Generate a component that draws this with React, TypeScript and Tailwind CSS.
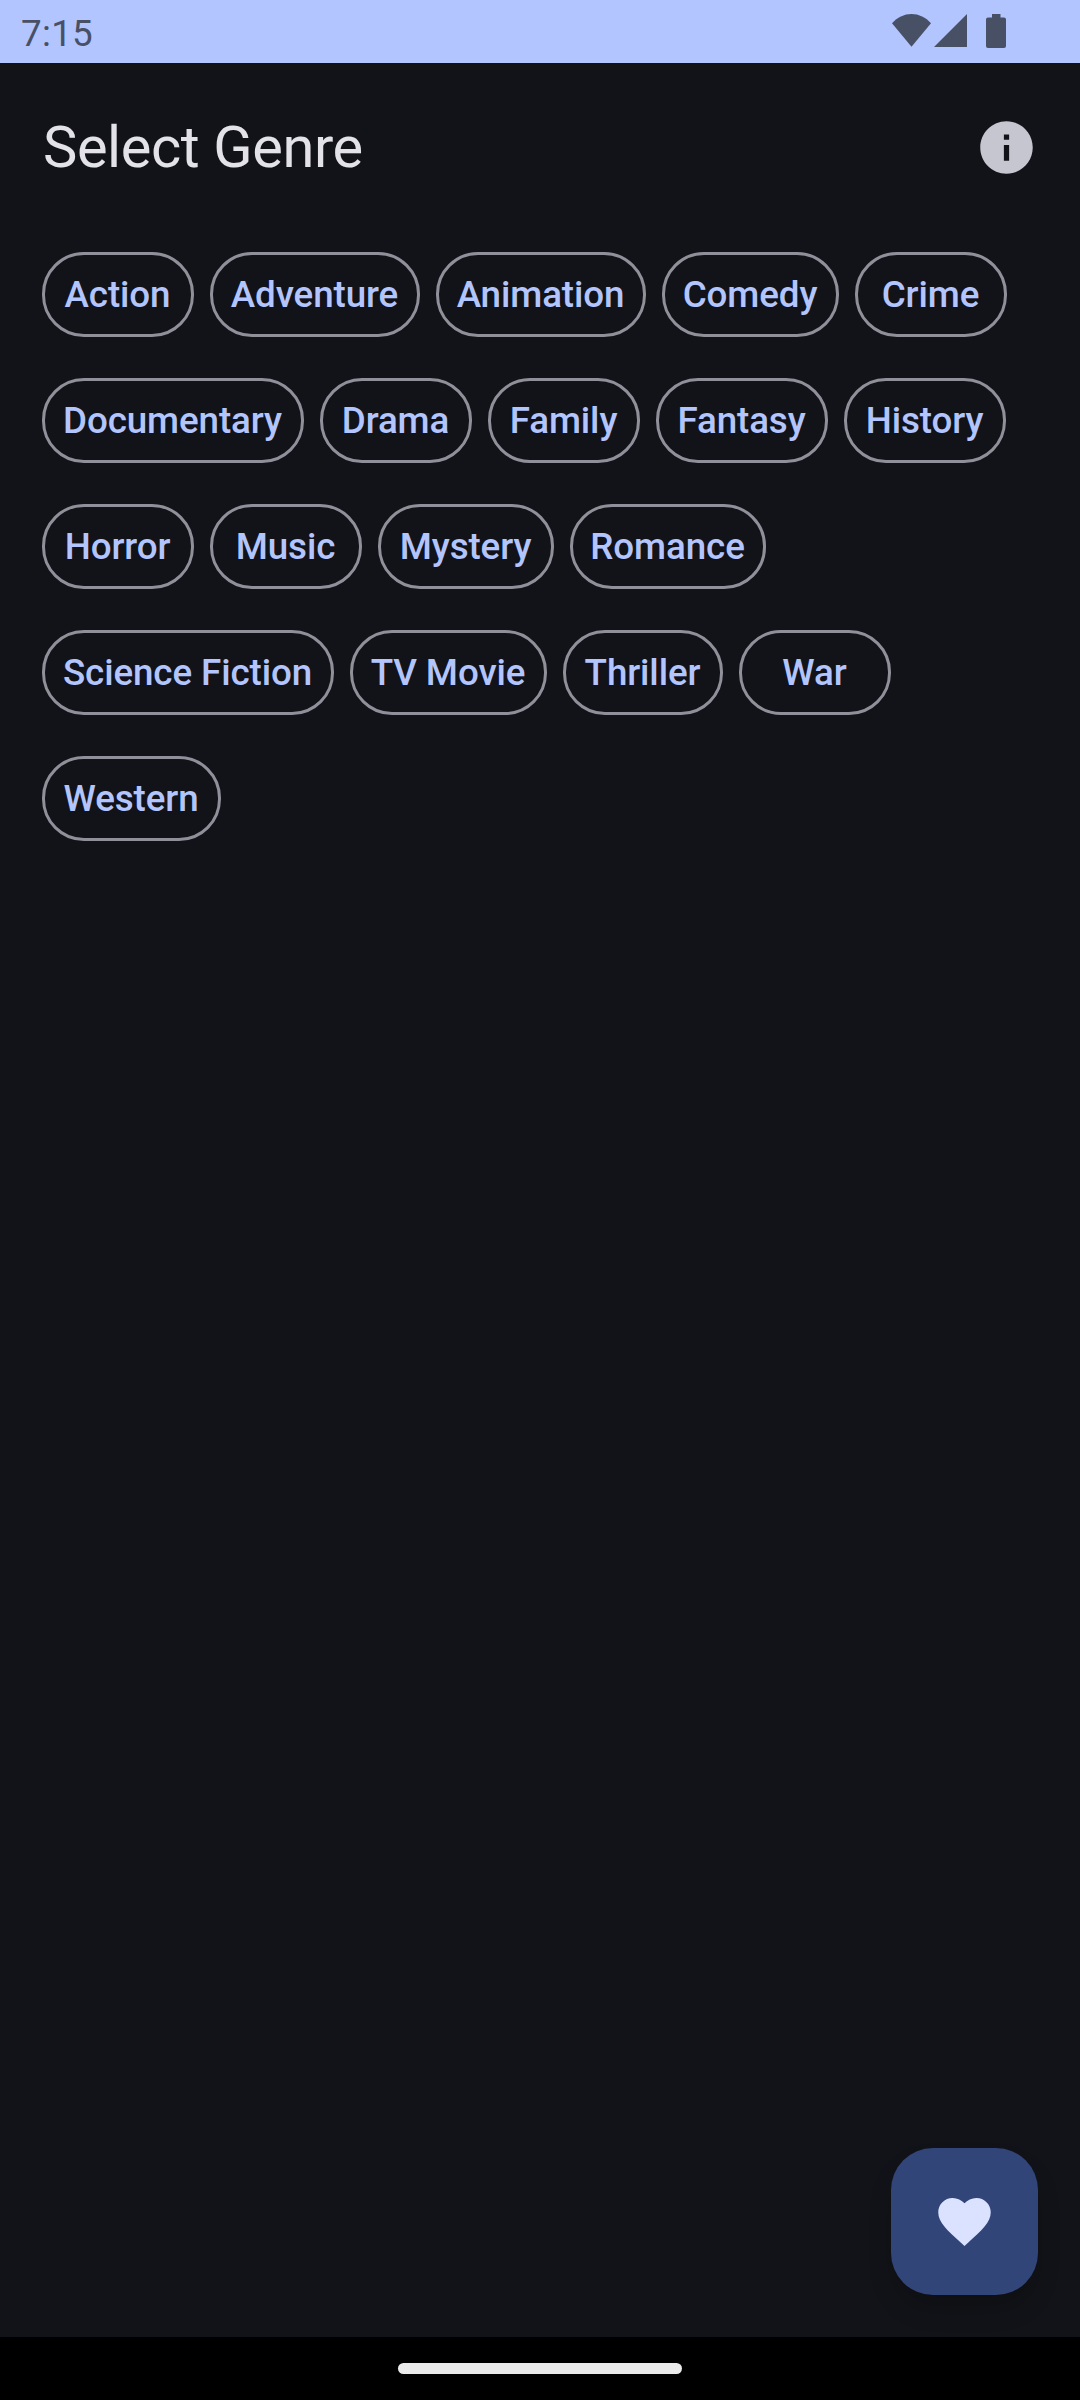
type Genre = { name: string; width: string };

const rows: Genre[][] = [
  [
    { name: "Action", width: "w-[152px]" },
    { name: "Adventure", width: "w-[210px]" },
    { name: "Animation", width: "w-[210px]" },
    { name: "Comedy", width: "w-[177px]" },
    { name: "Crime", width: "w-[152px]" },
  ],
  [
    { name: "Documentary", width: "w-[262px]" },
    { name: "Drama", width: "w-[152px]" },
    { name: "Family", width: "w-[152px]" },
    { name: "Fantasy", width: "w-[172px]" },
    { name: "History", width: "w-[162px]" },
  ],
  [
    { name: "Horror", width: "w-[152px]" },
    { name: "Music", width: "w-[152px]" },
    { name: "Mystery", width: "w-[176px]" },
    { name: "Romance", width: "w-[196px]" },
  ],
  [
    { name: "Science Fiction", width: "w-[292px]" },
    { name: "TV Movie", width: "w-[197px]" },
    { name: "Thriller", width: "w-[160px]" },
    { name: "War", width: "w-[152px]" },
  ],
  [{ name: "Western", width: "w-[179px]" }],
];

function StatusBar() {
  return (
    <div className="flex h-[63px] shrink-0 items-start justify-between bg-[#b2c5ff] pl-[21px] pr-[74px] text-[#485066]">
      <span className="pt-[12px] text-[36.75px] leading-[43px] tracking-[0.3px]">7:15</span>
      <div className="flex pt-[14px]">
        <svg className="h-[33px] w-[39px]" viewBox="0 0 39 33" fill="currentColor">
          <path d="M0 9.3C5.3 3.4 12 0 19.5 0S33.700 3.400 39 9.300L19.500 32.700z" />
        </svg>
        <svg className="ml-[3px] h-[33px] w-[33px]" viewBox="0 0 33 33" fill="currentColor">
          <path d="M33 0v33H0z" />
        </svg>
        <svg className="ml-[19px] h-[34px] w-[20px]" viewBox="0 0 20 34" fill="currentColor">
          <path d="M6 0h8.500v3.500H18a2 2 0 0 1 2 2V32a2 2 0 0 1-2 2H2a2 2 0 0 1-2-2V5.500a2 2 0 0 1 2-2h4z" />
        </svg>
      </div>
    </div>
  );
}

function Chip({ name, width }: Genre) {
  return (
    <button
      className={`${width} flex h-[85px] shrink-0 items-center justify-center whitespace-nowrap rounded-[42px] border-[3px] border-[#8f909a] pr-px text-[36.75px] font-medium leading-[52px] tracking-[-0.1px] text-[#b2c5ff]`}
    >
      {name}
    </button>
  );
}

export default function App() {
  return (
    <div className="flex h-[2400px] w-[1080px] flex-col overflow-hidden bg-[#121318] font-['Roboto',sans-serif]">
      <StatusBar />
      <header className="flex h-[168px] shrink-0 items-center justify-between pl-[43px] pr-[42px]">
        <h1 className="text-[57.75px] leading-[73px] tracking-[-0.4px] text-[#e3e2e9]">Select Genre</h1>
        <button aria-label="About">
          <svg className="size-[63px]" viewBox="0 0 24 24" fill="#c5c6d0">
            <path d="M12 2C6.480 2 2 6.480 2 12s4.480 10 10 10 10-4.480 10-10S17.520 2 12 2zm1 15h-2v-6h2v6zm0-8h-2V7h2v2z" />
          </svg>
        </button>
      </header>
      <main className="flex grow flex-col gap-[41px] pl-[42px] pt-[21px]">
        {rows.map((row) => (
          <div key={row[0].name} className="flex gap-4">
            {row.map((genre) => (
              <Chip key={genre.name} {...genre} />
            ))}
          </div>
        ))}
      </main>
      <div className="flex shrink-0 justify-end pb-[42px] pr-[42px]">
        <button
          aria-label="Favorites"
          className="flex size-[147px] items-center justify-center rounded-[42px] bg-[#324578] shadow-[0_16px_26px_-4px_rgba(0,0,0,0.22)]"
        >
          <svg className="size-[63px]" viewBox="0 0 24 24" fill="#dae2ff">
            <path d="M12 21.350l-1.450-1.320C5.400 15.360 2 12.280 2 8.500 2 5.420 4.420 3 7.500 3c1.740 0 3.410.810 4.500 2.090C13.090 3.810 14.760 3 16.500 3 19.580 3 22 5.420 22 8.500c0 3.780-3.400 6.860-8.550 11.540L12 21.350z" />
          </svg>
        </button>
      </div>
      <div className="z-10 flex h-[63px] shrink-0 justify-center bg-black pt-[26px]">
        <div className="h-[11px] w-[284px] rounded-full bg-[#ebebeb]" />
      </div>
    </div>
  );
}
